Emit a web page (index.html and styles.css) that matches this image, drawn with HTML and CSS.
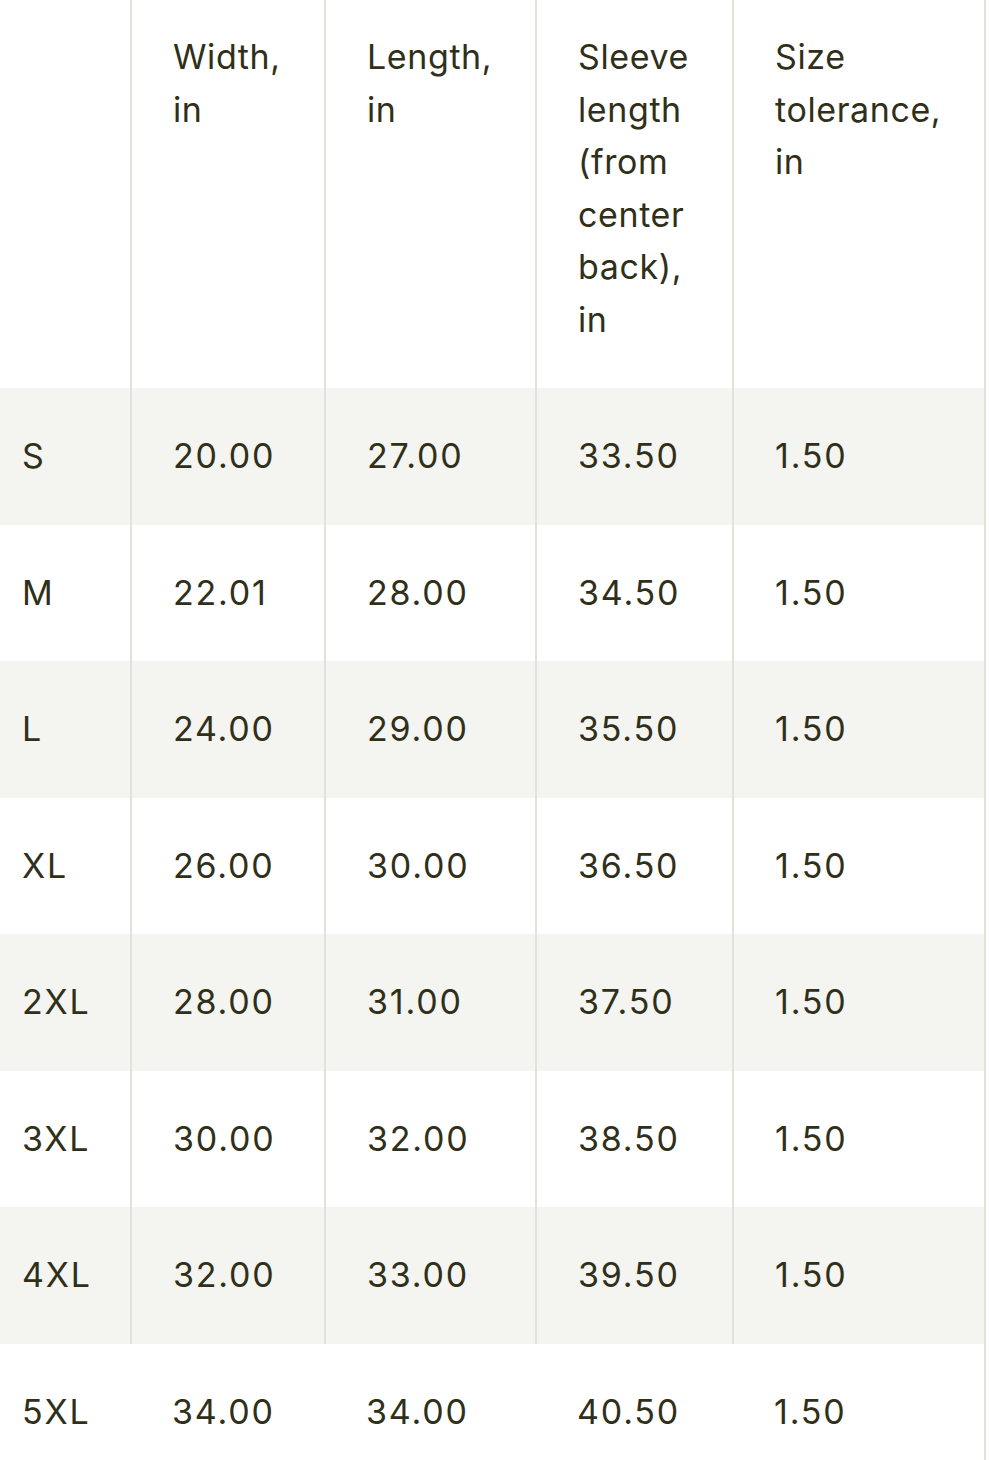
FILE: index.html
```html
<!DOCTYPE html>
<html lang="en">
<head>
<meta charset="utf-8">
<link rel="stylesheet" href="styles.css">
</head>
<body>
<div class="wrap">
<table class="size-table">
  <colgroup>
    <col class="c1"><col class="c2"><col class="c3"><col class="c4"><col class="c5">
  </colgroup>
  <thead>
    <tr>
      <th></th>
      <th>Width,<br>in</th>
      <th>Length,<br>in</th>
      <th>Sleeve<br>length<br>(from<br>center<br>back),<br>in</th>
      <th>Size<br>tolerance,<br>in</th>
    </tr>
  </thead>
  <tbody>
    <tr class="alt"><td>S</td><td>20.00</td><td>27.00</td><td>33.50</td><td>1.50</td></tr>
    <tr><td>M</td><td>22.01</td><td>28.00</td><td>34.50</td><td>1.50</td></tr>
    <tr class="alt"><td>L</td><td>24.00</td><td>29.00</td><td>35.50</td><td>1.50</td></tr>
    <tr><td>XL</td><td>26.00</td><td>30.00</td><td>36.50</td><td>1.50</td></tr>
    <tr class="alt"><td>2XL</td><td>28.00</td><td>31.00</td><td>37.50</td><td>1.50</td></tr>
    <tr><td>3XL</td><td>30.00</td><td>32.00</td><td>38.50</td><td>1.50</td></tr>
    <tr class="alt"><td>4XL</td><td>32.00</td><td>33.00</td><td>39.50</td><td>1.50</td></tr>
    <tr class="last"><td>5XL</td><td>34.00</td><td>34.00</td><td>40.50</td><td>1.50</td></tr>
  </tbody>
</table>
</div>
</body>
</html>
```
FILE: styles.css
```css
html, body {
  margin: 0;
  padding: 0;
  background: #ffffff;
}
.wrap {
  width: 984px;
  border-right: 2px solid #e2e2da;
  overflow: hidden;
}
.size-table {
  width: 984px;
  border-collapse: collapse;
  table-layout: fixed;
  font-family: "Inter", "Liberation Sans", sans-serif;
  font-size: 34px;
  line-height: 52.5px;
  color: #30301a;
}
.c1 { width: 131px; }
.c2 { width: 194px; }
.c3 { width: 211px; }
.c4 { width: 197px; }
.c5 { width: 251px; }
.size-table th,
.size-table td {
  text-align: left;
  font-weight: 400;
  padding: 42px 6px 42px 41px;
  border-left: 2px solid #e2e2da;
  vertical-align: middle;
  white-space: nowrap;
}
.size-table td {
  letter-spacing: 1.8px;
}
.size-table th {
  vertical-align: top;
  padding-top: 31px;
  padding-bottom: 42px;
  letter-spacing: 0.6px;
}
.size-table th:first-child,
.size-table td:first-child {
  border-left: none;
  padding-left: 22px;
}
.size-table tr.alt td {
  background: #f4f4f0;
}
.size-table tr.last td {
  border-left: none;
}
```
